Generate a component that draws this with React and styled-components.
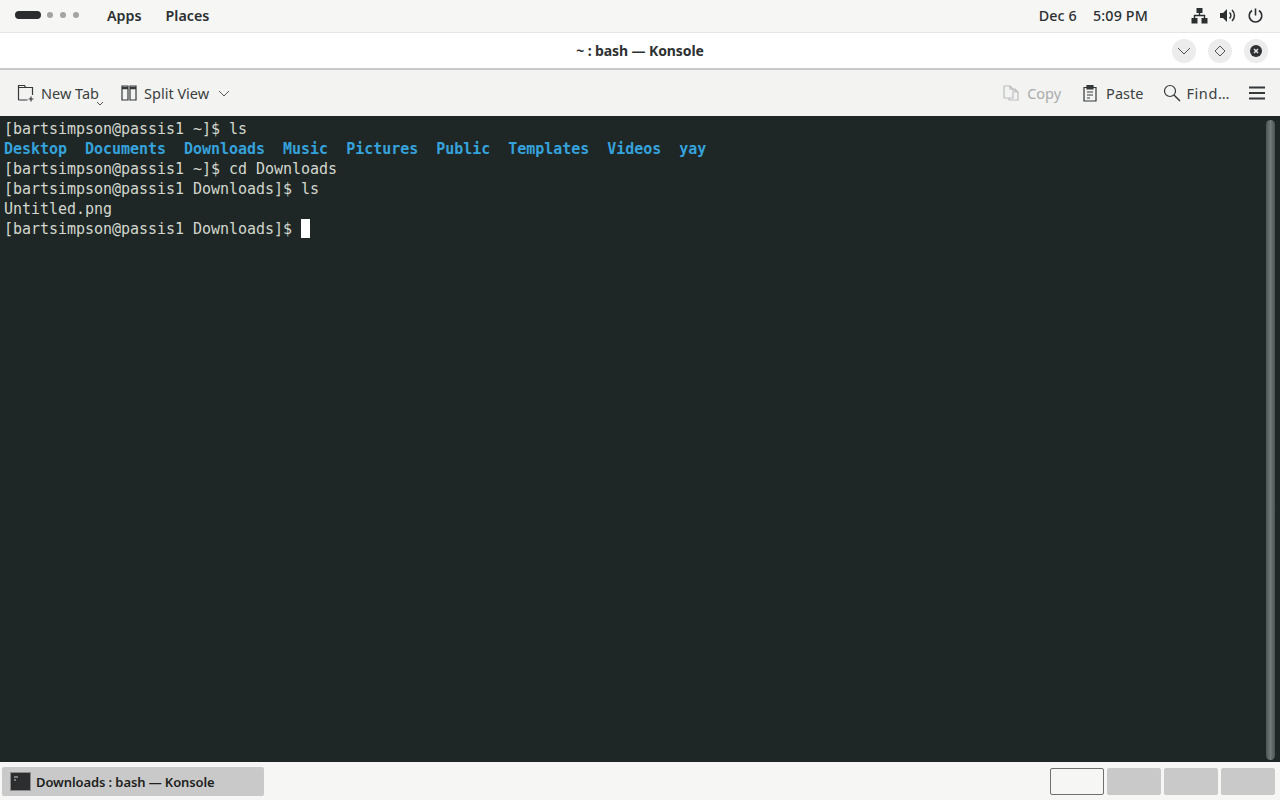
import React from 'react';
import styled, { createGlobalStyle } from 'styled-components';

const Global = createGlobalStyle`
  html, body { margin: 0; padding: 0; height: 100%; background: #f6f5f4; overflow: hidden; }
  #root { height: 100%; }
`;

const Screen = styled.div`
  width: 1280px;
  height: 800px;
  display: flex;
  flex-direction: column;
  font-family: "Noto Sans", "Open Sans", sans-serif;
  color: #2e3436;
`;

const TopBar = styled.div`
  height: 32px;
  flex: none;
  box-sizing: border-box;
  background: #f6f6f5;
  display: flex;
  align-items: center;
  padding: 0 16px 2px 15px;
  font-size: 14.3px;
  font-weight: 500;
  color: #2c2f30;
`;

const Workspaces = styled.div`
  display: flex;
  align-items: center;
  gap: 7px;
  width: 92px;
`;

const ActiveDot = styled.span`
  width: 26px;
  height: 8px;
  margin-right: -1px;
  border-radius: 4px;
  background: #2a2c2d;
`;

const Dot = styled.span`
  width: 6px;
  height: 6px;
  border-radius: 50%;
  background: #a3a3a3;
`;

const MenuLabel = styled.span`
  margin-right: 24px;
  font-weight: 600;
`;

const Spacer = styled.div`
  flex: 1;
`;

const ClockText = styled.span`
  margin-right: ${p => p.$gap}px;
  letter-spacing: 0.15px;
`;

const TrayIcon = styled.svg`
  width: 17px;
  height: 17px;
  margin-left: ${p => p.$gap || 0}px;
  fill: none;
  stroke: #2c2f30;
  display: block;
`;

const TitleBar = styled.div`
  height: 38px;
  flex: none;
  box-sizing: border-box;
  background: #ffffff;
  border-top: 1px solid #e6e6e6;
  border-bottom: 2px solid #c8c8c8;
  display: flex;
  align-items: center;
  justify-content: flex-end;
  position: relative;
  padding-right: 12px;
  gap: 12px;
`;

const Title = styled.div`
  position: absolute;
  left: 0;
  right: 0;
  text-align: center;
  font-size: 14px;
  font-weight: 700;
  letter-spacing: -0.1px;
  color: #2e3132;
`;

const WinButton = styled.button`
  width: 24px;
  height: 24px;
  padding: 0;
  border: 0;
  border-radius: 50%;
  background: #ececec;
  display: flex;
  align-items: center;
  justify-content: center;
`;

const ToolBar = styled.div`
  height: 46px;
  flex: none;
  box-sizing: border-box;
  background: #f3f3f2;
  display: flex;
  align-items: center;
  padding: 0 14px 0 17px;
  font-size: 14.5px;
  color: #3b3f40;
`;

const ToolItem = styled.div`
  display: flex;
  align-items: center;
  margin-left: ${p => p.$gap || 0}px;
  color: ${p => (p.$disabled ? '#a9abab' : '#3b3f40')};
  position: relative;
`;

const ToolLabel = styled.span`
  margin-left: ${p => p.$gap || 6}px;
  letter-spacing: ${p => p.$spacing || 0}px;
`;

const ToolIcon = styled.svg`
  width: 18px;
  height: 18px;
  fill: none;
  stroke: ${p => (p.$disabled ? '#bcbebe' : '#35393a')};
  stroke-width: 1.2;
  display: block;
`;

const TabCaret = styled.svg`
  position: absolute;
  right: -5px;
  bottom: -3px;
  width: 8px;
  height: 5px;
  fill: none;
  stroke: #555;
`;

const SplitCaret = styled.svg`
  width: 12px;
  height: 7px;
  margin-left: 9px;
  fill: none;
  stroke: #555;
`;

const Terminal = styled.div`
  flex: 1;
  background: #1f2726;
  position: relative;
  padding: 3px 0 0 4px;
  font-family: "DejaVu Sans Mono", "Liberation Mono", monospace;
  font-size: 15px;
  letter-spacing: -0.03px;
  line-height: 20px;
  color: #d3d7cf;
  white-space: pre;
`;

const Line = styled.div`
  height: 20px;
`;

const Dir = styled.span`
  color: #35a2dc;
  font-weight: 700;
`;

const Cursor = styled.span`
  display: inline-block;
  width: 9px;
  height: 19px;
  background: #ffffff;
  vertical-align: -4px;
`;

const ScrollBar = styled.div`
  position: absolute;
  top: 4px;
  bottom: 2px;
  right: 5px;
  width: 9px;
  border-radius: 5px;
  background: linear-gradient(90deg, #4a5452, #727a78 50%, #4a5452);
`;

const TaskBar = styled.div`
  height: 38px;
  flex: none;
  box-sizing: border-box;
  background: #f6f6f5;
  display: flex;
  align-items: center;
  padding: 0 5px 0 2px;
`;

const Task = styled.div`
  width: 262px;
  height: 29px;
  background: #c9c9c9;
  border-radius: 2px;
  display: flex;
  align-items: center;
  padding-left: 8px;
  box-sizing: border-box;
  font-size: 13px;
  font-weight: 600;
  letter-spacing: -0.1px;
  color: #1d1f20;
`;

const TaskLabel = styled.span`
  margin-left: 5px;
  padding-top: 2px;
`;

const Pager = styled.div`
  display: flex;
  gap: 3px;
`;

const Desk = styled.div`
  width: 54px;
  height: 27px;
  box-sizing: border-box;
  border-radius: 2px;
  background: ${p => (p.$active ? '#f6f6f5' : '#c9c9c9')};
  border: ${p => (p.$active ? '1px solid #6f6f6f' : '1px solid #c9c9c9')};
`;

const App = () => {
  return (
    <Screen>
      <Global />
      <TopBar>
        <Workspaces>
          <ActiveDot />
          <Dot />
          <Dot />
          <Dot />
        </Workspaces>
        <MenuLabel>Apps</MenuLabel>
        <MenuLabel>Places</MenuLabel>
        <Spacer />
        <ClockText $gap={16}>Dec 6</ClockText>
        <ClockText $gap={43}>5:09 PM</ClockText>
        <TrayIcon viewBox="0 0 17 17">
          <path d="M5.5 1h6v5h-6zM0.5 11h6v5.5h-6zM10.5 11h6v5.5h-6z" fill="#2c2f30" stroke="none" />
          <path d="M8.5 6v3M3.5 11V8.5h10V11" strokeWidth="1.4" />
        </TrayIcon>
        <TrayIcon viewBox="0 0 17 17" $gap={11}>
          <path d="M1 6h3l4-4v13l-4-4H1z" fill="#2c2f30" stroke="none" />
          <path d="M10.5 5.5a4 4 0 0 1 0 6M13 3a7.5 7.5 0 0 1 0 11" strokeWidth="1.5" />
        </TrayIcon>
        <TrayIcon viewBox="0 0 17 17" $gap={11}>
          <path d="M8.5 1.5v7M5 3.5a6.3 6.3 0 1 0 7 0" strokeWidth="1.6" />
        </TrayIcon>
      </TopBar>

      <TitleBar>
        <Title>~ : bash — Konsole</Title>
        <WinButton aria-label="minimize">
          <svg width="14" height="8" viewBox="0 0 14 8" fill="none" stroke="#555">
            <path d="M1 1l6 6 6-6" />
          </svg>
        </WinButton>
        <WinButton aria-label="maximize">
          <svg width="12" height="12" viewBox="0 0 12 12" fill="none" stroke="#555">
            <path d="M6 1l5 5-5 5-5-5z" />
          </svg>
        </WinButton>
        <WinButton aria-label="close">
          <svg width="12" height="12" viewBox="0 0 12 12">
            <circle cx="6" cy="6" r="6" fill="#2e3132" />
            <path d="M4 4l4 4M8 4l-4 4" stroke="#ececec" strokeWidth="1.4" />
          </svg>
        </WinButton>
      </TitleBar>

      <ToolBar>
        <ToolItem>
          <ToolIcon viewBox="0 0 18 18">
            <path d="M1.5 16V1.5h6l1 2h7V11M1.5 16h9M1.5 3.5h7" />
            <path d="M14 12.5v5M11.5 15h5" />
          </ToolIcon>
          <ToolLabel>New Tab</ToolLabel>
          <TabCaret viewBox="0 0 8 5">
            <path d="M1 1l3 3 3-3" />
          </TabCaret>
        </ToolItem>
        <ToolItem $gap={21}>
          <ToolIcon viewBox="0 0 18 18">
            <path d="M2 2h6v14H2zM10 2h6v14h-6z" />
            <path d="M2 4h6M10 4h6" strokeWidth="2.4" />
          </ToolIcon>
          <ToolLabel>Split View</ToolLabel>
          <SplitCaret viewBox="0 0 12 7">
            <path d="M1 1l5 5 5-5" />
          </SplitCaret>
        </ToolItem>
        <Spacer />
        <ToolItem $disabled>
          <ToolIcon viewBox="0 0 18 18" $disabled>
            <path d="M2 2h6l3 3v9H2zM8 2v3h3M11 5h2l3 3v8H7v-2M13 5v3h3" />
          </ToolIcon>
          <ToolLabel $gap={7}>Copy</ToolLabel>
        </ToolItem>
        <ToolItem $gap={20}>
          <ToolIcon viewBox="0 0 18 18">
            <path d="M3 3.5h12V17H3z" />
            <path d="M6 1.5h6V5H6z" fill="#35393a" />
            <path d="M6 8h6M6 11h6M6 14h3" />
          </ToolIcon>
          <ToolLabel $gap={7}>Paste</ToolLabel>
        </ToolItem>
        <ToolItem $gap={20}>
          <ToolIcon viewBox="0 0 18 18">
            <circle cx="7" cy="7" r="5.5" />
            <path d="M11 11l6 6" strokeWidth="1.5" />
          </ToolIcon>
          <ToolLabel $gap={5} $spacing={0.6}>Find…</ToolLabel>
        </ToolItem>
        <ToolItem $gap={18}>
          <ToolIcon viewBox="0 0 18 18">
            <path d="M1 3.5h16M1 9h16M1 14.5h16" strokeWidth="2" />
          </ToolIcon>
        </ToolItem>
      </ToolBar>

      <Terminal>
        <Line>[bartsimpson@passis1 ~]$ ls</Line>
        <Line>
          <Dir>Desktop</Dir>  <Dir>Documents</Dir>  <Dir>Downloads</Dir>  <Dir>Music</Dir>  <Dir>Pictures</Dir>  <Dir>Public</Dir>  <Dir>Templates</Dir>  <Dir>Videos</Dir>  <Dir>yay</Dir>
        </Line>
        <Line>[bartsimpson@passis1 ~]$ cd Downloads</Line>
        <Line>[bartsimpson@passis1 Downloads]$ ls</Line>
        <Line>Untitled.png</Line>
        <Line>[bartsimpson@passis1 Downloads]$ <Cursor /></Line>
        <ScrollBar />
      </Terminal>

      <TaskBar>
        <Task>
          <svg width="21" height="19" viewBox="0 0 21 19">
            <rect x="0.5" y="0.5" width="20" height="18" fill="#2b2d2e" stroke="#8a8a8a" />
            <path d="M4 5h4M4 8h2" stroke="#cfcfcf" />
          </svg>
          <TaskLabel>Downloads : bash — Konsole</TaskLabel>
        </Task>
        <Spacer />
        <Pager>
          <Desk $active />
          <Desk />
          <Desk />
          <Desk />
        </Pager>
      </TaskBar>
    </Screen>
  );
};

export default App;
